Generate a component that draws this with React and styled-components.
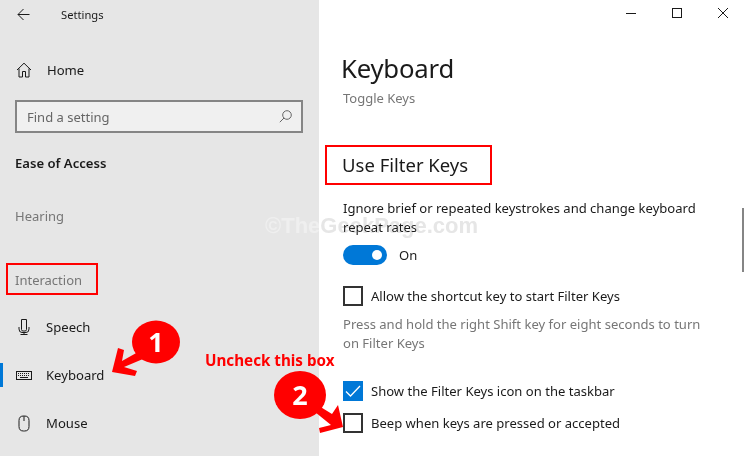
import React from 'react'
import styled, { createGlobalStyle } from 'styled-components'

const GlobalStyle = createGlobalStyle`
  html, body {
    margin: 0;
    padding: 0;
    background: #fff;
  }
  body {
    font-family: "Noto Sans", "Open Sans", sans-serif;
    color: #1a1a1a;
  }
`

const Shell = styled.div`
  position: relative;
  display: flex;
  width: 745px;
  height: 456px;
  overflow: hidden;
`

const Sidebar = styled.aside`
  width: 319px;
  flex: none;
  background: #e6e6e6;
  display: flex;
  flex-direction: column;
`

const TitleBar = styled.div`
  height: 28px;
  display: flex;
  align-items: center;
  padding-left: 17px;
  gap: 31px;
  font-size: 11.2px;
`

const NavRow = styled.div`
  position: relative;
  height: 48px;
  display: flex;
  align-items: center;
  font-size: 13.1px;
  padding-left: 16px;
  gap: 14px;

  ${props => props.$active && `
    &::before {
      content: '';
      position: absolute;
      left: 0;
      top: 12px;
      width: 3px;
      height: 24px;
      background: #0078d7;
    }
  `}
`

const HomeRow = styled(NavRow)`
  margin-top: 18px;
  gap: 15px;
`

const SpeechRow = styled(NavRow)`
  margin-top: 13px;
`

const SearchBox = styled.div`
  box-sizing: border-box;
  width: 288px;
  height: 33px;
  margin: 6px 0 0 15px;
  padding: 0 9px 0 10px;
  display: flex;
  align-items: center;
  justify-content: space-between;
  background: #f0f0f0;
  border: 2px solid #858585;
  font-size: 13px;
  color: #666;
`

const GroupTitle = styled.div`
  margin: 20px 0 0 15px;
  height: 20px;
  line-height: 20px;
  font-size: 13.1px;
  font-weight: 600;
`

const SectionLabel = styled.div`
  margin: ${props => props.$top}px 0 0 15px;
  height: 20px;
  line-height: 20px;
  font-size: 13px;
  color: #767676;
`

const Main = styled.main`
  flex: 1;
  position: relative;
  padding-left: 24px;
  display: flex;
  flex-direction: column;
`

const WindowControls = styled.div`
  position: absolute;
  top: 7px;
  right: 16px;
  display: flex;
  gap: 34px;
`

const PageTitle = styled.h1`
  margin: 49px 0 0 -2px;
  height: 40px;
  line-height: 40px;
  font-size: 25.7px;
  font-weight: 400;
  letter-spacing: -0.2px;
`

const PageSubtitle = styled.div`
  height: 19px;
  line-height: 19px;
  font-size: 13px;
  color: #767676;
`

const SectionTitle = styled.h2`
  margin: 43px 0 0 -1px;
  height: 28px;
  line-height: 28px;
  font-size: 18.5px;
  font-weight: 400;
`

const Description = styled.p`
  margin: ${props => props.$top || 0}px 0 0;
  width: 372px;
  font-size: 13.05px;
  line-height: 18.5px;
  color: ${props => props.$muted ? '#767676' : '#1a1a1a'};
`

const ToggleRow = styled.div`
  display: flex;
  align-items: center;
  gap: 12px;
  margin-top: 9px;
  height: 20px;
  font-size: 13.05px;
`

const ToggleTrack = styled.div`
  box-sizing: border-box;
  width: 44px;
  height: 20px;
  padding: 0 5px;
  border-radius: 10px;
  background: #0078d7;
  display: flex;
  align-items: center;
  justify-content: flex-end;
`

const ToggleKnob = styled.div`
  width: 10px;
  height: 10px;
  border-radius: 50%;
  background: #fff;
`

const CheckRow = styled.div`
  display: flex;
  align-items: center;
  gap: 8px;
  height: 20px;
  margin-top: ${props => props.$top}px;
  font-size: 13.05px;
`

const Box = styled.div`
  box-sizing: border-box;
  width: 20px;
  height: 20px;
  flex: none;
  display: flex;
  align-items: center;
  justify-content: center;
  border: 2px solid ${props => props.$checked ? '#0078d7' : '#333'};
  background: ${props => props.$checked ? '#0078d7' : '#fff'};
`

const Scrollbar = styled.div`
  position: absolute;
  top: 208px;
  right: 1px;
  width: 2px;
  height: 64px;
  background: #858585;
`

const Watermark = styled.div`
  position: absolute;
  left: 265px;
  top: 213px;
  white-space: nowrap;
  font-family: "Liberation Sans", sans-serif;
  font-weight: 700;
  font-size: 22px;
  line-height: 26px;
`

const WatermarkLeft = styled.span`
  color: #efefef;
  mix-blend-mode: lighten;
`

const WatermarkRight = styled.span`
  color: #e6e6e6;
  mix-blend-mode: darken;
`

const RedBox = styled.div`
  position: absolute;
  box-sizing: border-box;
  border: 2px solid #f00;
  left: ${props => props.$x}px;
  top: ${props => props.$y}px;
  width: ${props => props.$w}px;
  height: ${props => props.$h}px;
`

const Callout = styled.div`
  position: absolute;
  left: 205px;
  top: 349px;
  line-height: 22px;
  font-size: 15.2px;
  font-weight: 700;
  color: #f00;
  white-space: nowrap;
`

const Marker = styled.svg`
  position: absolute;
  left: 0;
  top: 0;
`

const Badge = styled.div`
  position: absolute;
  left: ${props => props.$x}px;
  top: ${props => props.$y}px;
  width: 48px;
  height: 44px;
  line-height: 44px;
  text-align: center;
  font-size: 27px;
  font-weight: 700;
  color: #fff;
`

const Icon = ({ w = 16, h = 16, color = '#1a1a1a', children }) => (
  <svg width={w} height={h} viewBox={`0 0 ${w} ${h}`} fill="none" stroke={color} strokeWidth="1" style={{ flex: 'none', display: 'block' }}>
    {children}
  </svg>
)

const BackIcon = () => (
  <Icon w={13} h={13}>
    <path d="M12.5 6.5H1M6.5 1L1 6.5L6.5 12" />
  </Icon>
)

const HomeIcon = () => (
  <Icon>
    <path d="M1 8L8 1.2L15 8M3 6.5V15H6.5V9.5H9.5V15H13V6.5" />
  </Icon>
)

const MicIcon = () => (
  <Icon>
    <path d="M5.5 0.5H10.5V10.5Q10.5 12 9 12H7Q5.5 12 5.5 10.5Z" />
    <path d="M3 8V10Q3 13.5 6 13.5H10Q13 13.5 13 10V8M8 13.5V15.5M4.5 15.5H11.5" />
  </Icon>
)

const KeyboardIcon = () => (
  <Icon w={16} h={12}>
    <rect x="0.5" y="2.5" width="15" height="8" />
    <path d="M2 4.5H14M2 6.5H14" strokeDasharray="1 1" />
    <path d="M4 8.5H12" />
  </Icon>
)

const MouseIcon = () => (
  <Icon h={17}>
    <path d="M3 5.5Q3 1 7.5 1H8.5Q13 1 13 5.5V11.5Q13 16 8.5 16H7.5Q3 16 3 11.5Z" />
    <path d="M8 1V6" />
  </Icon>
)

const SearchIcon = () => (
  <Icon w={13} h={13} color="#666">
    <circle cx="8" cy="5" r="4.3" />
    <path d="M5 8L0.8 12.2" />
  </Icon>
)

const MinimizeIcon = () => (
  <Icon w={12} h={12}>
    <path d="M1 6.5H11" />
  </Icon>
)

const MaximizeIcon = () => (
  <Icon w={12} h={12}>
    <rect x="1.5" y="1.5" width="9" height="9" />
  </Icon>
)

const CloseIcon = () => (
  <Icon w={12} h={12}>
    <path d="M1 1L11 11M11 1L1 11" />
  </Icon>
)

const CheckMark = () => (
  <svg width="16" height="12" viewBox="0 0 16 12" fill="none" stroke="#fff" strokeWidth="1.3">
    <path d="M1 6.5L5.5 11L15 1" />
  </svg>
)

const App = () => (
  <Shell>
    <GlobalStyle />
    <Sidebar>
      <TitleBar>
        <BackIcon />
        <span>Settings</span>
      </TitleBar>
      <HomeRow><HomeIcon />Home</HomeRow>
      <SearchBox>
        Find a setting
        <SearchIcon />
      </SearchBox>
      <GroupTitle>Ease of Access</GroupTitle>
      <SectionLabel $top={33}>Hearing</SectionLabel>
      <SectionLabel $top={44}>Interaction</SectionLabel>
      <SpeechRow><MicIcon />Speech</SpeechRow>
      <NavRow $active><KeyboardIcon />Keyboard</NavRow>
      <NavRow><MouseIcon />Mouse</NavRow>
    </Sidebar>

    <Main>
      <WindowControls>
        <MinimizeIcon />
        <MaximizeIcon />
        <CloseIcon />
      </WindowControls>
      <PageTitle>Keyboard</PageTitle>
      <PageSubtitle>Toggle Keys</PageSubtitle>
      <SectionTitle>Use Filter Keys</SectionTitle>
      <Description $top={20}>Ignore brief or repeated keystrokes and change keyboard repeat rates</Description>
      <ToggleRow>
        <ToggleTrack><ToggleKnob /></ToggleTrack>
        On
      </ToggleRow>
      <CheckRow $top={21}><Box />Allow the shortcut key to start Filter Keys</CheckRow>
      <Description $muted $top={9}>Press and hold the right Shift key for eight seconds to turn on Filter Keys</Description>
      <CheckRow $top={29}><Box $checked><CheckMark /></Box>Show the Filter Keys icon on the taskbar</CheckRow>
      <CheckRow $top={12}><Box />Beep when keys are pressed or accepted</CheckRow>
      <Scrollbar />
    </Main>

    <Watermark>
      <WatermarkLeft>©The</WatermarkLeft>
      <WatermarkRight>GeekPage.com</WatermarkRight>
    </Watermark>

    <RedBox $x={6} $y={263} $w={92} $h={32} />
    <RedBox $x={325} $y={145} $w={167} $h={40} />

    <Marker width="745" height="456" viewBox="0 0 745 456" fill="#f00">
      <ellipse cx="156" cy="342" rx="24" ry="21.5" />
      <path d="M138 352L143 359L124 367L137 371L135 376L112 372L118 348L124 350L122 361Z" />
      <ellipse cx="300" cy="395" rx="26" ry="24" />
      <path d="M319 406L332 414L338 405L343 427L320 433L319 428L331 425L315 412Z" />
    </Marker>
    <Badge $x={132} $y={320}>1</Badge>
    <Badge $x={276} $y={373}>2</Badge>
    <Callout>Uncheck this box</Callout>
  </Shell>
)

export default App
